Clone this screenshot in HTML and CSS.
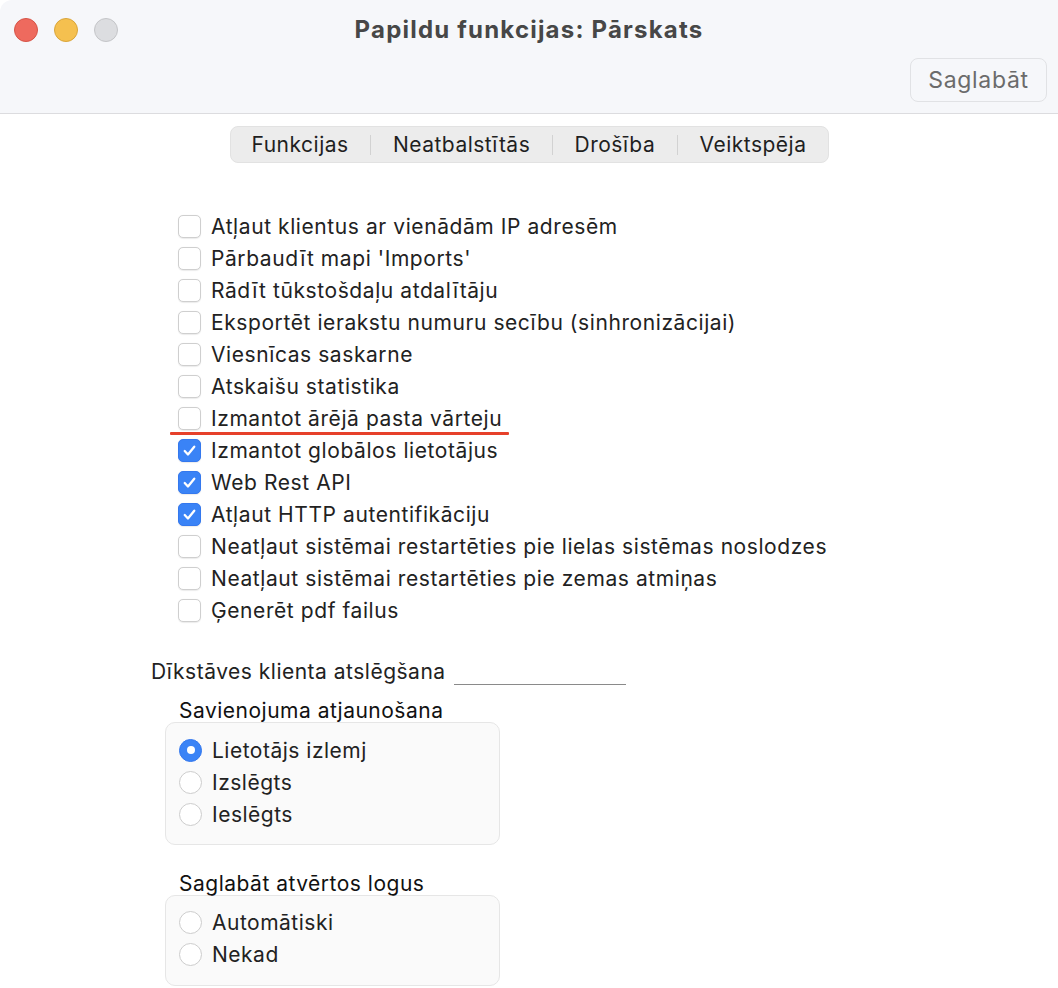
FILE: index.html
```html
<!DOCTYPE html>
<html lang="lv">
<head>
<meta charset="utf-8">
<title>Papildu funkcijas: Pārskats</title>
<link rel="stylesheet" href="styles.css">
</head>
<body>
<div class="window">
  <header class="titlebar">
    <div class="lights">
      <span class="light red"></span>
      <span class="light yellow"></span>
      <span class="light gray"></span>
    </div>
    <h1 class="title">Papildu funkcijas: Pārskats</h1>
    <div class="toolbar">
      <button class="save">Saglabāt</button>
    </div>
  </header>
  <main class="content">
    <nav class="segments">
      <span class="seg">Funkcijas</span>
      <span class="sep"></span>
      <span class="seg">Neatbalstītās</span>
      <span class="sep"></span>
      <span class="seg">Drošība</span>
      <span class="sep"></span>
      <span class="seg">Veiktspēja</span>
    </nav>
    <ul class="checks">
      <li><span class="cb"></span>Atļaut klientus ar vienādām IP adresēm</li>
      <li><span class="cb"></span>Pārbaudīt mapi 'Imports'</li>
      <li><span class="cb"></span>Rādīt tūkstošdaļu atdalītāju</li>
      <li><span class="cb"></span>Eksportēt ierakstu numuru secību (sinhronizācijai)</li>
      <li><span class="cb"></span>Viesnīcas saskarne</li>
      <li><span class="cb"></span>Atskaišu statistika</li>
      <li class="marked"><span class="cb"></span>Izmantot ārējā pasta vārteju<span class="redline"></span></li>
      <li><span class="cb on"><svg viewBox="0 0 22 22"><path d="M6 11.5l3.4 3.6L16 7" fill="none" stroke="#fff" stroke-width="2.4" stroke-linecap="round" stroke-linejoin="round"/></svg></span>Izmantot globālos lietotājus</li>
      <li><span class="cb on"><svg viewBox="0 0 22 22"><path d="M6 11.5l3.4 3.6L16 7" fill="none" stroke="#fff" stroke-width="2.4" stroke-linecap="round" stroke-linejoin="round"/></svg></span>Web Rest API</li>
      <li><span class="cb on"><svg viewBox="0 0 22 22"><path d="M6 11.5l3.4 3.6L16 7" fill="none" stroke="#fff" stroke-width="2.4" stroke-linecap="round" stroke-linejoin="round"/></svg></span>Atļaut HTTP autentifikāciju</li>
      <li><span class="cb"></span>Neatļaut sistēmai restartēties pie lielas sistēmas noslodzes</li>
      <li><span class="cb"></span>Neatļaut sistēmai restartēties pie zemas atmiņas</li>
      <li><span class="cb"></span>Ģenerēt pdf failus</li>
    </ul>
    <div class="idle">
      <span>Dīkstāves klienta atslēgšana</span>
      <span class="field"></span>
    </div>
    <section class="group">
      <div class="group-label">Savienojuma atjaunošana</div>
      <div class="group-box">
        <div class="radio-row"><span class="rb on"></span>Lietotājs izlemj</div>
        <div class="radio-row"><span class="rb"></span>Izslēgts</div>
        <div class="radio-row"><span class="rb"></span>Ieslēgts</div>
      </div>
    </section>
    <section class="group second">
      <div class="group-label">Saglabāt atvērtos logus</div>
      <div class="group-box short">
        <div class="radio-row"><span class="rb"></span>Automātiski</div>
        <div class="radio-row"><span class="rb"></span>Nekad</div>
      </div>
    </section>
  </main>
</div>
</body>
</html>
```
FILE: styles.css
```css
* { box-sizing: border-box; }
html, body { margin: 0; padding: 0; background: #fff; }
body {
  font-family: Inter, "Noto Sans", "Liberation Sans", sans-serif;
  color: #222;
  width: 1058px;
  height: 988px;
  overflow: hidden;
}
.window { background: #fff; }
.titlebar {
  height: 114px;
  background: #f6f7fa;
  border-bottom: 1px solid #dcdcdf;
  border-top-left-radius: 12px;
  position: relative;
  display: flex;
  flex-direction: column;
}
.lights {
  position: absolute;
  left: 14px;
  top: 18px;
  display: flex;
  gap: 16px;
}
.light {
  width: 24px; height: 24px; border-radius: 50%;
  display: block;
}
.red { background: #ee6a5e; border: 1px solid #d65447; }
.yellow { background: #f5c04f; border: 1px solid #d9a53a; }
.gray { background: #dcdde0; border: 1px solid #c4c5c8; }
.title {
  margin: 0;
  padding-top: 15px;
  text-align: center;
  font-size: 24px;
  letter-spacing: 1.2px;
  font-weight: 700;
  color: #474747;
  line-height: 30px;
}
.toolbar {
  display: flex;
  justify-content: flex-end;
  padding: 13px 11px 0 0;
}
.save {
  height: 44px;
  width: 137px;
  border: 1px solid #e1e2e5;
  border-radius: 8px;
  background: #f6f7fa;
  font-family: inherit;
  font-size: 23px;
  letter-spacing: 0.7px;
  color: #6b6b6b;
  padding: 0;
}
.content { padding-top: 12px; }
.segments {
  margin: 0 auto;
  width: 599px;
  height: 37px;
  background: #ececec;
  border: 1px solid #e2e2e2;
  border-radius: 8px;
  display: flex;
  align-items: center;
  justify-content: space-between;
  padding: 0 21px;
  font-size: 21px;
  letter-spacing: 0.5px;
  color: #1f1f1f;
}
.sep { width: 1px; height: 20px; background: #d2d2d2; }
.checks {
  list-style: none;
  margin: 47px 0 0 0;
  padding: 0 0 0 178px;
}
.checks li {
  height: 32px;
  display: flex;
  align-items: center;
  gap: 10px;
  font-size: 21px;
  letter-spacing: 0.58px;
  position: relative;
}
.cb {
  width: 23px; height: 23px;
  border: 1px solid #cfcfcf;
  border-radius: 5px;
  background: #fff;
  box-shadow: 0 0.5px 1px rgba(0,0,0,0.08);
  display: block;
  flex: none;
}
.cb.on {
  background: #3a83f6;
  border-color: #3478ee;
}
.cb svg { display: block; width: 100%; height: 100%; }
.redline {
  position: absolute;
  left: -8px;
  top: 30px;
  width: 339px;
  height: 3px;
  background: #e6402a;
  border-radius: 1px;
}
.idle {
  margin-top: 29px;
  padding-left: 151px;
  height: 32px;
  display: flex;
  align-items: center;
  gap: 8px;
  font-size: 21px;
  letter-spacing: 0.5px;
}
.field {
  width: 172px;
  height: 20px;
  border-bottom: 1.5px solid #8a8a8a;
  align-self: flex-start;
  margin-top: 10px;
}
.group { padding-left: 165px; }
.group-label {
  padding-left: 14px;
  font-size: 21px;
  letter-spacing: 0.5px;
  line-height: 22px;
  height: 22px;
  margin-top: 13px;
  color: #111;
}
.second .group-label { margin-top: 28px; }
.group-box {
  width: 335px;
  background: #fafafa;
  border: 1px solid #e6e6e6;
  border-radius: 10px;
  padding: 11px 0 14px 13px;
}
.group-box.short { padding: 10px 0 15px 13px; }
.radio-row {
  height: 32px;
  display: flex;
  align-items: center;
  gap: 10px;
  font-size: 21px;
  letter-spacing: 0.5px;
}
.rb {
  width: 23px; height: 23px;
  border-radius: 50%;
  border: 1px solid #cdcdcd;
  background: #fff;
  flex: none;
  display: block;
  position: relative;
}
.rb.on { background: #3a83f6; border-color: #3478ee; }
.rb.on::after {
  content: "";
  position: absolute;
  left: 50%; top: 50%;
  width: 8px; height: 8px;
  margin: -4px 0 0 -4px;
  background: #fff;
  border-radius: 50%;
}
```
